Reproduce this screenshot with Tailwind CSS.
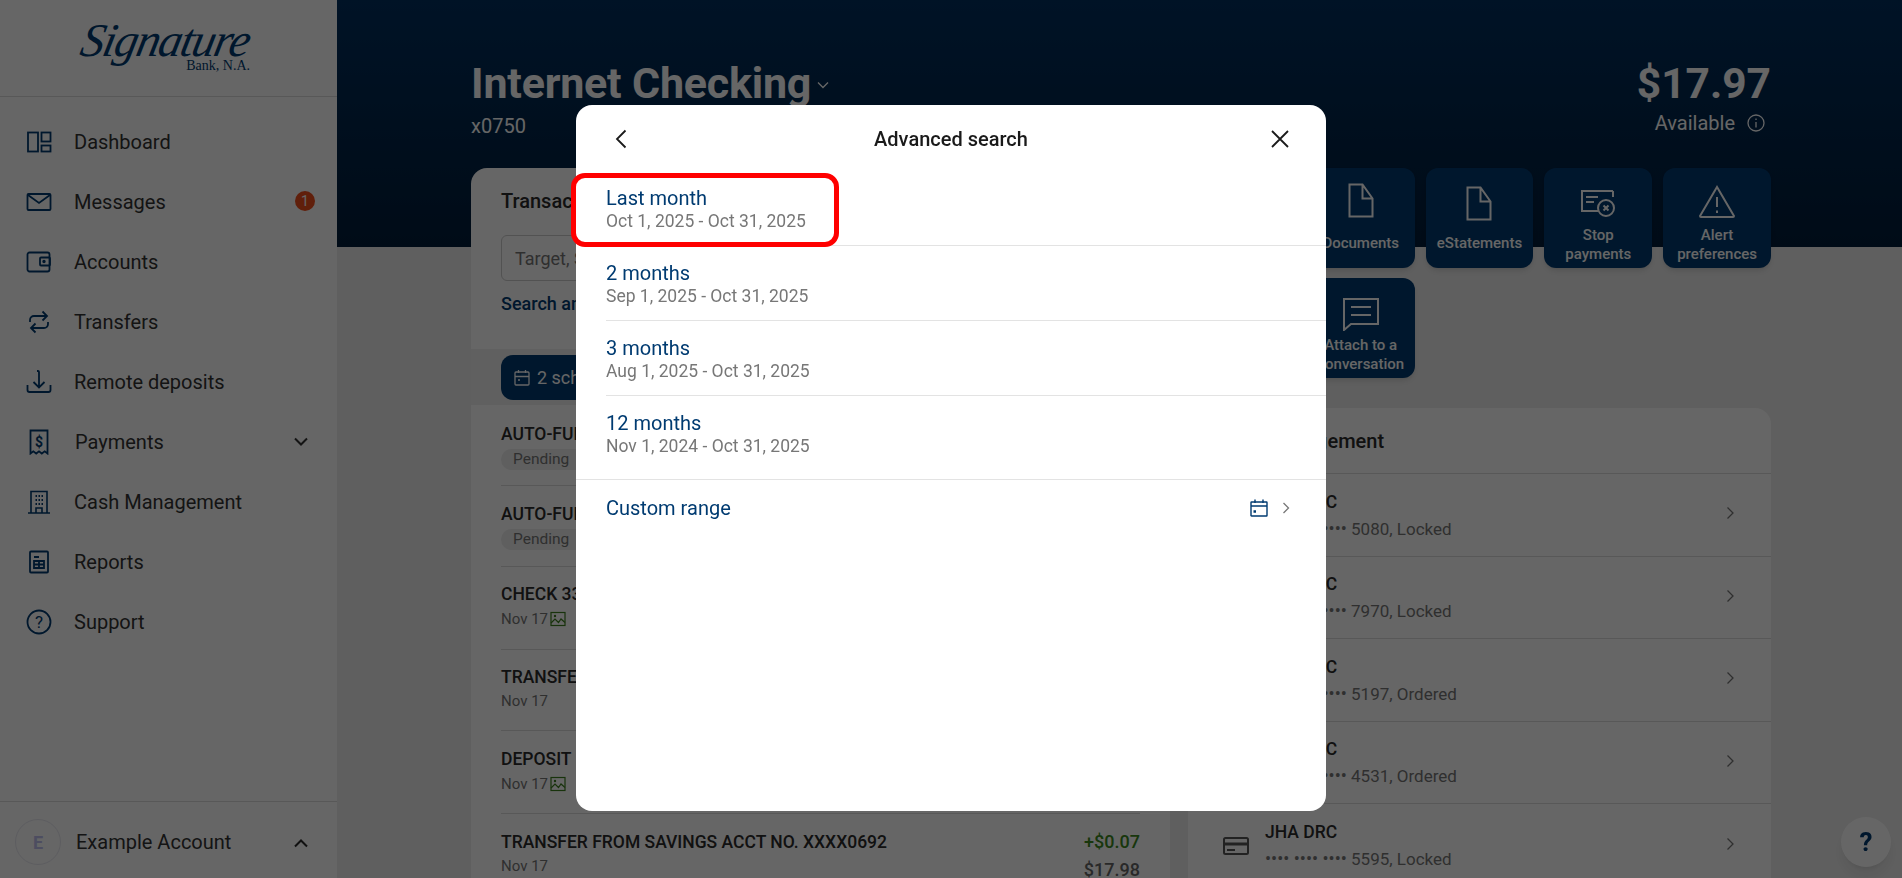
<!DOCTYPE html>
<html lang="en">
<head>
    <meta charset="UTF-8">
    <title>Signature Bank - Internet Checking</title>
    <script src="https://cdn.jsdelivr.net/npm/@tailwindcss/browser@4"></script>
</head>
<body class="h-screen overflow-hidden bg-[#eeeeee] font-['Roboto',sans-serif] text-[#2b2b2b]">
<div class="flex h-[878px]">
    <!-- Sidebar -->
    <aside class="w-[337px] shrink-0 bg-white flex flex-col">
        <div class="h-[97px] shrink-0 border-b border-[#dddddd] pl-[82px] pt-[21px] text-[#003b71]">
            <div class="font-['Liberation_Serif',serif] italic text-[47px] leading-[38px] tracking-[-1.5px] w-[168px] whitespace-nowrap -skew-x-12">Signature</div>
            <div class="font-['Liberation_Serif',serif] text-[14px] leading-[14px] w-[168px] text-right">Bank, N.A.</div>
        </div>
        <nav class="pt-[15px] text-[20px] text-[#333333]">
            <a class="flex items-center h-[60px] pl-[26px] gap-[22px]">
                <svg class="w-[26px] h-[26px]" viewBox="0 0 26 26" fill="none" stroke="#003b71" stroke-width="1.8"><rect x="2" y="3.500" width="10" height="19"/><rect x="15.500" y="3.500" width="9" height="9"/><rect x="15.500" y="16.500" width="9" height="6"/></svg>
                <span>Dashboard</span>
            </a>
            <a class="flex items-center h-[60px] pl-[26px] gap-[22px] relative">
                <svg class="w-[26px] h-[26px]" viewBox="0 0 26 26" fill="none" stroke="#003b71" stroke-width="1.8"><rect x="1.500" y="5" width="23" height="16" rx="1"/><path d="M2 6l11 8 11-8"/></svg>
                <span>Messages</span>
                <span class="absolute left-[295px] top-[19px] w-[20px] h-[20px] rounded-full bg-[#f04e1c] text-white text-[14px] leading-[20px] text-center">1</span>
            </a>
            <a class="flex items-center h-[60px] pl-[26px] gap-[22px]">
                <svg class="w-[26px] h-[26px]" viewBox="0 0 26 26" fill="none" stroke="#003b71" stroke-width="1.8"><rect x="1.500" y="3.500" width="22" height="19" rx="2"/><rect x="14" y="8.500" width="10" height="8" rx="1"/><circle cx="18" cy="12.500" r="0.800"/></svg>
                <span>Accounts</span>
            </a>
            <a class="flex items-center h-[60px] pl-[26px] gap-[22px]">
                <svg class="w-[26px] h-[26px]" viewBox="0 0 26 26" fill="none" stroke="#003b71" stroke-width="1.8"><path d="M4 13v-2a4 4 0 0 1 4-4h13M16.500 2.500L21 7l-4.500 4.500"/><path d="M22 13v2a4 4 0 0 1-4 4H5M9.500 14.500L5 19l4.500 4.500"/></svg>
                <span>Transfers</span>
            </a>
            <a class="flex items-center h-[60px] pl-[26px] gap-[22px]">
                <svg class="w-[26px] h-[26px]" viewBox="0 0 26 26" fill="none" stroke="#003b71" stroke-width="1.8"><path d="M1.500 16v5a2 2 0 0 0 2 2h19a2 2 0 0 0 2-2v-5"/><path d="M11 2h1a1 1 0 0 1 1 1v15M7.500 13l5.500 5.500 5.500-5.500"/></svg>
                <span>Remote deposits</span>
            </a>
            <a class="flex items-center h-[60px] pl-[26px] gap-[22px] relative">
                <svg class="w-[26px] h-[26px]" viewBox="0 0 26 26" fill="none" stroke="#003b71" stroke-width="1.8"><path d="M4.500 1.500h17v23l-2.800-2.200-2.900 2.200-2.800-2.200-2.800 2.200-2.900-2.200-2.800 2.200z"/><text x="13" y="18" text-anchor="middle" font-size="14" font-weight="700" fill="#003b71" stroke="none" font-family="Roboto">$</text></svg>
                <span class="ml-[1px]">Payments</span>
                <svg class="absolute left-[293px] top-[24px] w-[16px] h-[12px]" viewBox="0 0 16 12" fill="none" stroke="#333333" stroke-width="2"><path d="M2 2.500l6 6 6-6"/></svg>
            </a>
            <a class="flex items-center h-[60px] pl-[26px] gap-[22px]">
                <svg class="w-[26px] h-[26px]" viewBox="0 0 26 26" fill="none" stroke="#003b71" stroke-width="1.6"><path d="M2 24h22M5 24V2.500h16V24M10 24v-5h6v5"/><path d="M9.500 7h1.500M12.500 7H14M15.500 7H17M9.500 11h1.500M12.500 11H14M15.500 11H17M9.500 15h1.500M12.500 15H14M15.500 15H17" stroke-width="2"/></svg>
                <span>Cash Management</span>
            </a>
            <a class="flex items-center h-[60px] pl-[26px] gap-[22px]">
                <svg class="w-[26px] h-[26px]" viewBox="0 0 26 26" fill="none" stroke="#003b71" stroke-width="1.8"><rect x="4" y="2.500" width="18" height="21" rx="1"/><path d="M8 8h5M8 12h10v7H8zM8 15.500h10M13 12v7"/></svg>
                <span>Reports</span>
            </a>
            <a class="flex items-center h-[60px] pl-[26px] gap-[22px]">
                <svg class="w-[26px] h-[26px]" viewBox="0 0 26 26" fill="none" stroke="#003b71" stroke-width="1.8"><circle cx="13" cy="13" r="11.500"/><text x="13" y="19" text-anchor="middle" font-size="17" fill="#003b71" stroke="none" font-family="Roboto">?</text></svg>
                <span>Support</span>
            </a>
        </nav>
        <div class="mt-auto h-[77px] border-t border-[#dddddd] flex items-center pl-[15px] pt-[4px] text-[20px] text-[#333333] relative">
            <div class="w-[46px] h-[46px] rounded-full bg-white border border-[#e8e8f0] text-[#c0c0f0] font-bold text-[18px] flex items-center justify-center">E</div>
            <span class="ml-[15px]">Example Account</span>
            <svg class="absolute left-[293px] top-[35px] w-[16px] h-[12px]" viewBox="0 0 16 12" fill="none" stroke="#2b2b2b" stroke-width="2"><path d="M2 9.500l6-6 6 6"/></svg>
        </div>
    </aside>

    <!-- Main -->
    <main class="flex-1 min-w-0">
        <header class="h-[247px] bg-gradient-to-b from-[#003060] to-[#001d3a] pl-[134px] pr-[131px] pt-[56px] text-white flex justify-between">
            <div>
                <div class="flex items-center">
                    <h1 class="text-[43px] leading-[54px] font-bold tracking-[-0.2px]">Internet Checking</h1>
                    <svg class="ml-[6px] mt-[4px] w-[12px] h-[8px]" viewBox="0 0 12 8" fill="none" stroke="#ffffff" stroke-width="1.300"><path d="M1 1.500l5 5 5-5"/></svg>
                </div>
                <div class="text-[20px] leading-[24px] mt-[4px]">x0750</div>
            </div>
            <div class="flex flex-col items-end mt-[1px]">
                <div class="text-[42.5px] leading-[54px] font-bold">$17.97</div>
                <div class="flex items-center gap-[12px] text-[20px] leading-[24px] pr-[6px]">
                    <span>Available</span>
                    <svg class="w-[18px] h-[18px]" viewBox="0 0 18 18" fill="none" stroke="#ffffff" stroke-width="1.300"><circle cx="9" cy="9" r="8"/><path d="M9 8v5.500M9 4.500v1.500"/></svg>
                </div>
            </div>
        </header>

        <div class="-mt-[79px] ml-[134px] w-[1300px] grid grid-cols-[699px_583px] gap-[18px]">
            <!-- Transactions -->
            <section class="bg-white rounded-t-[16px] h-[800px] overflow-hidden">
                <div class="h-[181px] px-[30px] pt-[20px]">
                    <h2 class="text-[20px] leading-[26px] font-medium">Transactions</h2>
                    <div class="mt-[21px] h-[46px] border border-[#cccccc] rounded-[6px] pl-[13px] flex items-center text-[18px] text-[#777777]">Target, Starbucks, etc.</div>
                    <div class="mt-[11px] text-[18px] leading-[24px] font-medium text-[#003b71]">Search and filter</div>
                </div>
                <div class="h-[56px] bg-[#f0f0f0] px-[30px] pt-[6px]">
                    <div class="w-[300px] h-[45px] bg-[#003b71] rounded-[12px] flex items-center gap-[6px] pl-[12px] text-white text-[18px]">
                        <svg class="w-[18px] h-[18px]" viewBox="0 0 18 18" fill="none" stroke="#ffffff" stroke-width="1.300"><rect x="2" y="3" width="14" height="13" rx="1"/><path d="M2 7.500h14M5.500 1v3M12.500 1v3M5 11h2" /></svg>
                        <span>2 scheduled</span>
                    </div>
                </div>
                <div class="px-[30px]">
                    <div class="h-[81px] border-b border-[#dddddd] pt-[18px]">
                        <div class="text-[17.5px] leading-[22px] font-medium">AUTO-FUND</div>
                        <div class="mt-[4px] w-[90px] h-[21px] rounded-full bg-[#eeeeee] pl-[12px] text-[15.5px] leading-[21px] text-[#777777]">Pending</div>
                    </div>
                    <div class="h-[81px] border-b border-[#dddddd] pt-[17px]">
                        <div class="text-[17.5px] leading-[22px] font-medium">AUTO-FUND</div>
                        <div class="mt-[4px] w-[90px] h-[21px] rounded-full bg-[#eeeeee] pl-[12px] text-[15.5px] leading-[21px] text-[#777777]">Pending</div>
                    </div>
                    <div class="h-[83px] border-b border-[#dddddd] pt-[16px]">
                        <div class="text-[17.5px] leading-[22px] font-medium">CHECK 3312</div>
                        <div class="mt-[3px] flex items-center gap-[2px] text-[15px] leading-[22px] text-[#777777]">
                            <span>Nov 17</span>
                            <svg class="w-[16px] h-[16px]" viewBox="0 0 16 16" fill="none" stroke="#3d7f1f" stroke-width="1.200"><rect x="1" y="1.500" width="14" height="13"/><path d="M1 12l4-4 3.500 3.500L11 8l4 3.500"/><circle cx="5" cy="5" r="0.600"/></svg>
                        </div>
                    </div>
                    <div class="h-[81px] border-b border-[#dddddd] pt-[16px]">
                        <div class="text-[17.5px] leading-[22px] font-medium">TRANSFER</div>
                        <div class="mt-[2px] text-[15px] leading-[22px] text-[#777777]">Nov 17</div>
                    </div>
                    <div class="h-[83px] border-b border-[#dddddd] pt-[17px]">
                        <div class="text-[17.5px] leading-[22px] font-medium">DEPOSIT</div>
                        <div class="mt-[3px] flex items-center gap-[2px] text-[15px] leading-[22px] text-[#777777]">
                            <span>Nov 17</span>
                            <svg class="w-[16px] h-[16px]" viewBox="0 0 16 16" fill="none" stroke="#3d7f1f" stroke-width="1.200"><rect x="1" y="1.500" width="14" height="13"/><path d="M1 12l4-4 3.500 3.500L11 8l4 3.500"/><circle cx="5" cy="5" r="0.600"/></svg>
                        </div>
                    </div>
                    <div class="h-[82px] pt-[17px] flex justify-between">
                        <div>
                            <div class="text-[17.5px] leading-[22px] font-medium">TRANSFER FROM SAVINGS ACCT NO. XXXX0692</div>
                            <div class="mt-[2px] text-[15px] leading-[22px] text-[#777777]">Nov 17</div>
                        </div>
                        <div class="text-right text-[18px] font-medium leading-[22px]">
                            <div class="text-[#3d8a1f]">+$0.07</div>
                            <div class="mt-[6px] text-[#666666]">$17.98</div>
                        </div>
                    </div>
                </div>
            </section>

            <!-- Right column -->
            <div>
                <div class="grid grid-cols-5 gap-x-[11px] gap-y-[10px] text-white text-[15px] leading-[19px] font-medium text-center">
                    <div class="h-[100px] rounded-[12px] bg-[#003b71]"></div>
                    <div class="h-[100px] rounded-[12px] bg-[#003b71] flex flex-col items-center pt-[15px] shadow-md">
                        <svg class="w-[26px] h-[36px] shrink-0" viewBox="0 0 26 36" fill="none" stroke="#ffffff" stroke-width="2"><path d="M1.500 1.500h13l10 14v18h-23zM14.500 1.500v14h10"/></svg>
                        <div class="flex-1 flex items-center pb-[1px]">Documents</div>
                    </div>
                    <div class="h-[100px] rounded-[12px] bg-[#003b71] flex flex-col items-center pt-[18px] shadow-md">
                        <svg class="w-[26px] h-[36px] shrink-0" viewBox="0 0 26 36" fill="none" stroke="#ffffff" stroke-width="2"><path d="M1.500 1.500h13l10 14v18h-23zM14.500 1.500v14h10"/></svg>
                        <div class="flex-1 flex items-center pb-[4px]">eStatements</div>
                    </div>
                    <div class="h-[100px] rounded-[12px] bg-[#003b71] flex flex-col items-center pt-[20px] shadow-md">
                        <svg class="w-[36px] h-[30px] shrink-0" viewBox="0 0 36 30" fill="none" stroke="#ffffff" stroke-width="2"><path d="M33 3H2v20h16"/><path d="M6 9h12M6 14h8" /><path d="M33 3v6" /><circle cx="26" cy="20" r="8"/><path d="M23.500 17.500l5 5M28.500 17.500l-5 5"/></svg>
                        <div class="flex-1 flex items-center pt-[3px]">Stop<br>payments</div>
                    </div>
                    <div class="h-[100px] rounded-[12px] bg-[#003b71] flex flex-col items-center pt-[17px] shadow-md">
                        <svg class="w-[38px] h-[34px] shrink-0" viewBox="0 0 38 34" fill="none" stroke="#ffffff" stroke-width="2"><path d="M19 2L2 31a1 1 0 0 0 1 1h32a1 1 0 0 0 1-1z"/><path d="M19 12v10M19 25.500v2.500"/></svg>
                        <div class="flex-1 flex items-center pt-[2px]">Alert<br>preferences</div>
                    </div>
                    <div class="h-[100px] rounded-[12px] bg-[#003b71]"></div>
                    <div class="h-[100px] rounded-[12px] bg-[#003b71] flex flex-col items-center pt-[19px] shadow-md whitespace-nowrap">
                        <svg class="w-[38px] h-[34px] shrink-0" viewBox="0 0 38 34" fill="none" stroke="#ffffff" stroke-width="2"><path d="M2 2h34v25H9l-7 6z"/><path d="M9 10h20M9 18h20"/></svg>
                        <div class="flex-1 flex items-center">Attach to a<br>conversation</div>
                    </div>
                </div>

                <!-- Card list -->
                <section class="mt-[30px] bg-white rounded-t-[16px] h-[480px] overflow-hidden">
                    <div class="h-[66px] border-b border-[#dddddd] pl-[31px] flex items-center text-[20px] font-medium">Card management</div>
                    <div class="h-[83px] border-b border-[#dddddd] flex items-center pl-[32px] pr-[36px] gap-[13px]">
                        <svg class="w-[32px] h-[24px]" viewBox="0 0 32 24" fill="none" stroke="#555555" stroke-width="2"><rect x="4" y="4" width="24" height="16" rx="1.500"/><path d="M4 10h24" stroke-width="3"/><path d="M7 16h8"/></svg>
                        <div class="flex-1"><div class="text-[17.5px] leading-[24px] font-medium">JHA DRC</div><div class="text-[17px] leading-[24px] text-[#777777] mt-[3px]"><span class="text-[18px]">•••• •••• ••••</span> 5080, Locked</div></div>
                        <svg class="w-[10px] h-[14px] -mt-[4px]" viewBox="0 0 10 14" fill="none" stroke="#777777" stroke-width="1.300"><path d="M2.500 1.500L8 7l-5.500 5.500"/></svg>
                    </div>
                    <div class="h-[82px] border-b border-[#dddddd] flex items-center pl-[32px] pr-[36px] gap-[13px]">
                        <svg class="w-[32px] h-[24px]" viewBox="0 0 32 24" fill="none" stroke="#555555" stroke-width="2"><rect x="4" y="4" width="24" height="16" rx="1.500"/><path d="M4 10h24" stroke-width="3"/><path d="M7 16h8"/></svg>
                        <div class="flex-1"><div class="text-[17.5px] leading-[24px] font-medium">JHA DRC</div><div class="text-[17px] leading-[24px] text-[#777777] mt-[3px]"><span class="text-[18px]">•••• •••• ••••</span> 7970, Locked</div></div>
                        <svg class="w-[10px] h-[14px] -mt-[4px]" viewBox="0 0 10 14" fill="none" stroke="#777777" stroke-width="1.300"><path d="M2.500 1.500L8 7l-5.500 5.500"/></svg>
                    </div>
                    <div class="h-[83px] border-b border-[#dddddd] flex items-center pl-[32px] pr-[36px] gap-[13px]">
                        <svg class="w-[32px] h-[24px]" viewBox="0 0 32 24" fill="none" stroke="#555555" stroke-width="2"><rect x="4" y="4" width="24" height="16" rx="1.500"/><path d="M4 10h24" stroke-width="3"/><path d="M7 16h8"/></svg>
                        <div class="flex-1"><div class="text-[17.5px] leading-[24px] font-medium">JHA DRC</div><div class="text-[17px] leading-[24px] text-[#777777] mt-[3px]"><span class="text-[18px]">•••• •••• ••••</span> 5197, Ordered</div></div>
                        <svg class="w-[10px] h-[14px] -mt-[4px]" viewBox="0 0 10 14" fill="none" stroke="#777777" stroke-width="1.300"><path d="M2.500 1.500L8 7l-5.500 5.500"/></svg>
                    </div>
                    <div class="h-[82px] border-b border-[#dddddd] flex items-center pl-[32px] pr-[36px] gap-[13px]">
                        <svg class="w-[32px] h-[24px]" viewBox="0 0 32 24" fill="none" stroke="#555555" stroke-width="2"><rect x="4" y="4" width="24" height="16" rx="1.500"/><path d="M4 10h24" stroke-width="3"/><path d="M7 16h8"/></svg>
                        <div class="flex-1"><div class="text-[17.5px] leading-[24px] font-medium">JHA DRC</div><div class="text-[17px] leading-[24px] text-[#777777] mt-[3px]"><span class="text-[18px]">•••• •••• ••••</span> 4531, Ordered</div></div>
                        <svg class="w-[10px] h-[14px] -mt-[4px]" viewBox="0 0 10 14" fill="none" stroke="#777777" stroke-width="1.300"><path d="M2.500 1.500L8 7l-5.500 5.500"/></svg>
                    </div>
                    <div class="h-[83px] flex items-center pl-[32px] pr-[36px] gap-[13px]">
                        <svg class="w-[32px] h-[24px]" viewBox="0 0 32 24" fill="none" stroke="#555555" stroke-width="2"><rect x="4" y="4" width="24" height="16" rx="1.500"/><path d="M4 10h24" stroke-width="3"/><path d="M7 16h8"/></svg>
                        <div class="flex-1"><div class="text-[17.5px] leading-[24px] font-medium">JHA DRC</div><div class="text-[17px] leading-[24px] text-[#777777] mt-[3px]"><span class="text-[18px]">•••• •••• ••••</span> 5595, Locked</div></div>
                        <svg class="w-[10px] h-[14px] -mt-[4px]" viewBox="0 0 10 14" fill="none" stroke="#777777" stroke-width="1.300"><path d="M2.500 1.500L8 7l-5.500 5.500"/></svg>
                    </div>
                </section>
            </div>
        </div>
    </main>
</div>

<!-- Help button -->
<button class="fixed left-[1841px] top-[817px] w-[50px] h-[50px] rounded-full bg-white shadow-lg text-[#003b71] text-[26px] font-bold">?</button>

<!-- Backdrop -->
<div class="fixed inset-0 bg-black/60"></div>

<!-- Advanced search modal -->
<div class="fixed left-[576px] top-[105px] w-[750px] h-[706px] bg-white rounded-[16px] overflow-hidden">
    <div class="h-[66px] px-[37px] pt-[3px] pb-[1px] flex items-center justify-between">
        <svg class="w-[16px] h-[22px]" viewBox="0 0 16 22" fill="none" stroke="#1a1a1a" stroke-width="1.800"><path d="M12.500 2.500L4 11l8.500 8.500"/></svg>
        <h2 class="ml-[2px] text-[20px] font-medium text-[#1a1a1a]">Advanced search</h2>
        <svg class="w-[18px] h-[18px]" viewBox="0 0 18 18" fill="none" stroke="#1a1a1a" stroke-width="1.800"><path d="M1 1l16 16M17 1L1 17"/></svg>
    </div>
    <div class="pl-[30px]">
        <div class="h-[75px] border-b border-[#e3e3e3] pt-[15px]">
            <div class="text-[20px] leading-[24px] text-[#003b71]">Last month</div>
            <div class="text-[17.5px] leading-[22px] text-[#777777]">Oct 1, 2025 - Oct 31, 2025</div>
        </div>
        <div class="h-[75px] border-b border-[#e3e3e3] pt-[15px]">
            <div class="text-[20px] leading-[24px] text-[#003b71]">2 months</div>
            <div class="text-[17.5px] leading-[22px] text-[#777777]">Sep 1, 2025 - Oct 31, 2025</div>
        </div>
        <div class="h-[75px] border-b border-[#e3e3e3] pt-[15px]">
            <div class="text-[20px] leading-[24px] text-[#003b71]">3 months</div>
            <div class="text-[17.5px] leading-[22px] text-[#777777]">Aug 1, 2025 - Oct 31, 2025</div>
        </div>
        <div class="h-[83px] pt-[15px]">
            <div class="text-[20px] leading-[24px] text-[#003b71]">12 months</div>
            <div class="text-[17.5px] leading-[22px] text-[#777777]">Nov 1, 2024 - Oct 31, 2025</div>
        </div>
    </div>
    <div class="h-[60px] border-t border-[#e3e3e3] pl-[30px] pr-[36px] pb-[3px] flex items-center text-[20px] text-[#003b71]">
        <span class="flex-1">Custom range</span>
        <svg class="w-[18px] h-[18px]" viewBox="0 0 18 18" fill="none" stroke="#003b71" stroke-width="1.400"><rect x="1" y="3" width="16" height="14" rx="0.500"/><path d="M1 7h16M5 0.500V4M13 0.500V4"/><path d="M3.500 12.500h2.500" stroke-width="2.500"/></svg>
        <svg class="ml-[14px] w-[8px] h-[14px]" viewBox="0 0 8 14" fill="none" stroke="#777777" stroke-width="1.300"><path d="M1.500 2l5 5-5 5"/></svg>
    </div>
</div>

<!-- Highlight annotation -->
<div class="fixed left-[571px] top-[173px] w-[268px] h-[74px] rounded-[14px] border-[5px] border-[#ff0000]"></div>
</body>
</html>
